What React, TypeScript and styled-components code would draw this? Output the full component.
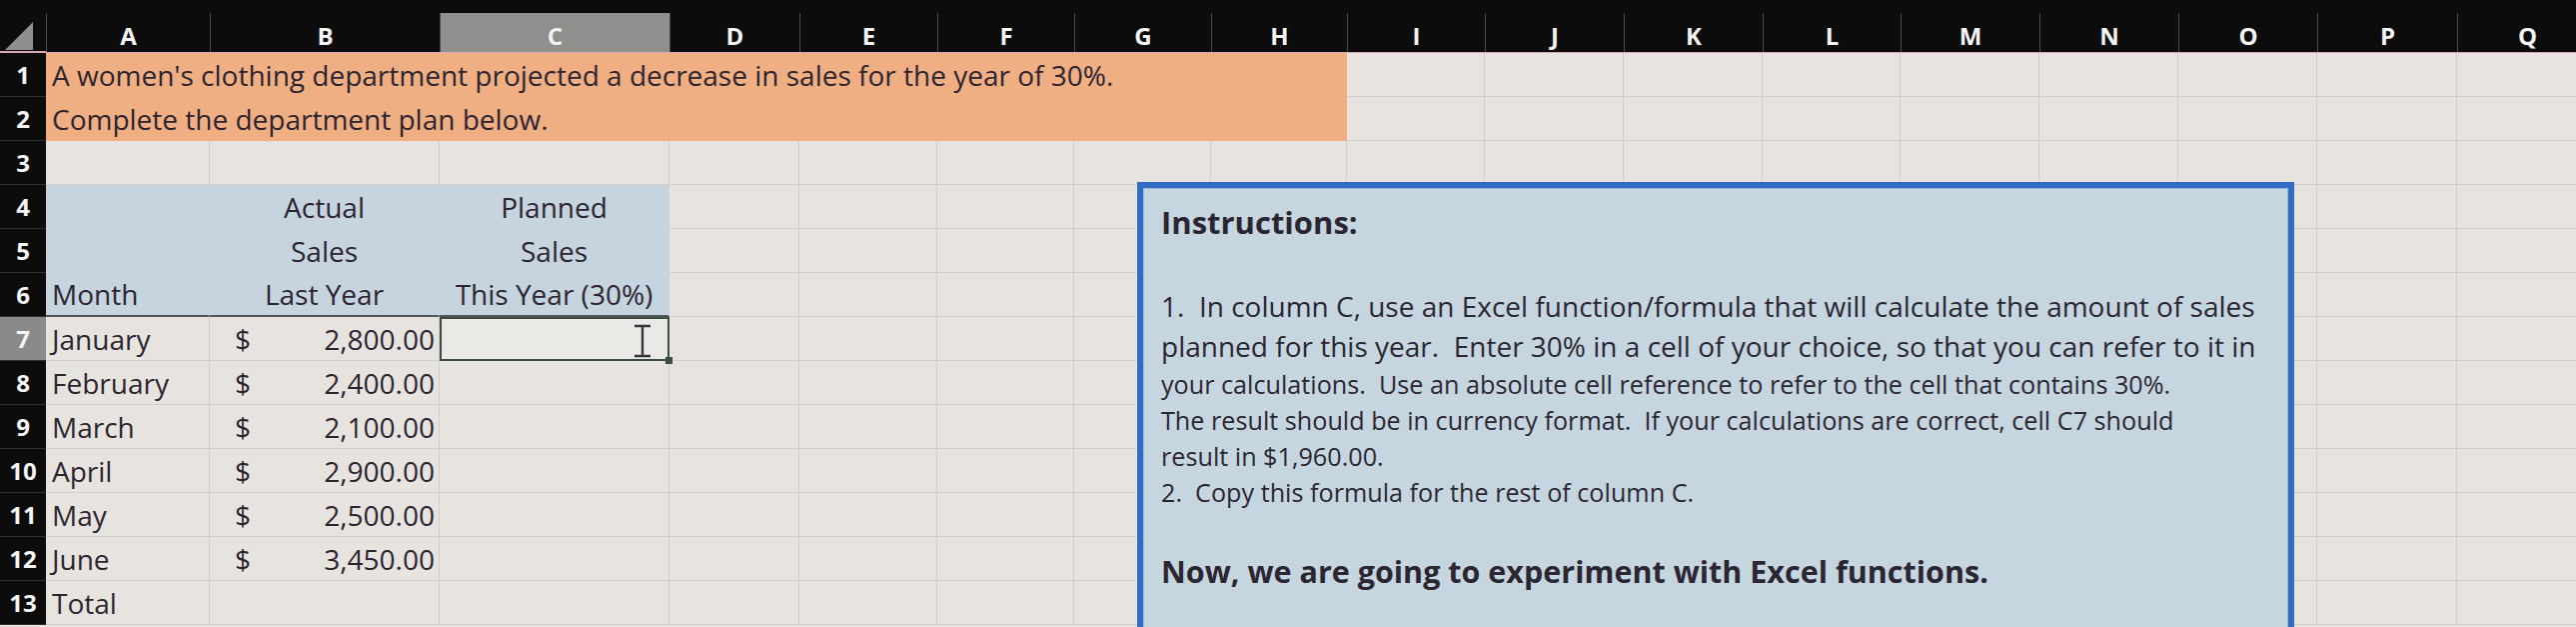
import React from "react";
import styled, { createGlobalStyle } from "styled-components";

const COLS = [46, 164, 230, 230, 130, 138, 137, 137, 136, 138, 139, 139, 138, 139, 139, 139, 140, 140];
const TEMPLATE = COLS.map((w) => `${w}px`).join(" ");
const LETTERS = "ABCDEFGHIJKLMNOPQ".split("");
const GRID = "#d2cec8";
const ORANGE = "#f0ae83";
const BLUE = "#c5d4de";
const FONT = `"Open Sans", Lato, "Liberation Sans", sans-serif`;

const GlobalStyle = createGlobalStyle`
  html, body {
    margin: 0;
    padding: 0;
    background: #e7e4df;
    overflow: hidden;
  }
`;

const Sheet = styled.div`
  position: relative;
  width: 2578px;
  height: 627px;
  overflow: hidden;
  background: #e7e4df;
  display: flex;
  flex-direction: column;
  font-family: ${FONT};
  color: #2d2530;
`;

const HeaderRow = styled.div`
  display: grid;
  grid-template-columns: ${TEMPLATE};
  height: 53px;
  box-sizing: border-box;
  padding-top: 13px;
  background: #0c0c0c;
  border-bottom: 2px solid #d8a8b6;
  flex-shrink: 0;
`;

const Corner = styled.div`
  & svg {
    display: block;
  }
`;

const ColHead = styled.div<{ $selected?: boolean }>`
  display: flex;
  align-items: center;
  justify-content: center;
  padding-top: 6px;
  box-sizing: border-box;
  background: ${(p) => (p.$selected ? "#8f8f8d" : "#0c0c0c")};
  border-left: 1px solid #4a4a4a;
  color: #f4f4f4;
  font-size: 24px;
  font-weight: 700;
`;

const Row = styled.div`
  display: grid;
  grid-template-columns: ${TEMPLATE};
  height: 44px;
  flex-shrink: 0;
`;

const RowHead = styled.div<{ $selected?: boolean }>`
  display: flex;
  align-items: center;
  justify-content: center;
  box-sizing: border-box;
  background: ${(p) => (p.$selected ? "#8a8a8a" : "#0c0c0c")};
  border-bottom: 1px solid #2e2e2e;
  color: #f5f5f5;
  font-size: 24px;
  font-weight: 700;
`;

const Cell = styled.div<{
  $fill?: string;
  $span?: number;
  $align?: "left" | "center" | "right";
  $rule?: boolean;
}>`
  display: flex;
  align-items: center;
  justify-content: ${(p) =>
    p.$align === "center" ? "center" : p.$align === "right" ? "flex-end" : "flex-start"};
  grid-column: span ${(p) => p.$span ?? 1};
  box-sizing: border-box;
  padding: 0 6px;
  background: ${(p) => p.$fill ?? "transparent"};
  border-right: 1px solid ${(p) => p.$fill ?? GRID};
  border-bottom: ${(p) => (p.$rule ? "2px solid #56545a" : `1px solid ${p.$fill ?? GRID}`)};
  font-size: 28px;
  white-space: nowrap;
  overflow: visible;
`;

const AmountCell = styled(Cell)`
  justify-content: space-between;
  padding: 0 4px 0 25px;
`;

const ActiveCell = styled(Cell)`
  position: relative;
  border: 2px solid #3a4d40;
  background: #ebe9e5;
  &::after {
    content: "";
    position: absolute;
    right: -5px;
    bottom: -5px;
    width: 7px;
    height: 7px;
    background: #3a4d40;
  }
`;

const Cursor = styled.svg`
  position: absolute;
  right: 14px;
  top: 5px;
`;

const NoteBox = styled.div`
  position: absolute;
  left: 1138px;
  top: 182px;
  width: 1158px;
  height: 480px;
  box-sizing: border-box;
  padding: 14px 18px;
  background: #c6d6e1;
  border: 6px solid #2f6cc2;
  box-shadow: inset 0 0 0 1px #9ab9e0;
  color: #2c2631;
  font-family: ${FONT};
`;

const NoteTitle = styled.div`
  font-size: 31px;
  font-weight: 700;
  line-height: 40px;
  margin-bottom: 44px;
`;

const NoteLine = styled.div<{ $small?: boolean }>`
  font-size: ${(p) => (p.$small ? 25.2 : 28)}px;
  line-height: ${(p) => (p.$small ? 36 : 40)}px;
  white-space: pre;
`;

const NoteFooter = styled.div`
  font-size: 30.5px;
  font-weight: 700;
  line-height: 44px;
  margin-top: 39px;
`;

const MONTHS: [string, string][] = [
  ["January", "2,800.00"],
  ["February", "2,400.00"],
  ["March", "2,100.00"],
  ["April", "2,900.00"],
  ["May", "2,500.00"],
  ["June", "3,450.00"],
];

const blanks = (n: number) => Array.from({ length: n }, (_, i) => <Cell key={`b${i}`} />);
const REST = COLS.length - 1;

export default function App() {
  return (
    <>
      <GlobalStyle />
      <Sheet>
        <HeaderRow>
          <Corner>
            <svg width="46" height="38" viewBox="0 0 46 38">
              <polygon points="33,9 33,37 5,37" fill="#8d8d8d" />
            </svg>
          </Corner>
          {LETTERS.map((l) => (
            <ColHead key={l} $selected={l === "C"}>
              {l}
            </ColHead>
          ))}
        </HeaderRow>

        <Row>
          <RowHead>1</RowHead>
          <Cell $fill={ORANGE} $span={8}>
            A women's clothing department projected a decrease in sales for the year of 30%.
          </Cell>
          {blanks(REST - 8)}
        </Row>
        <Row>
          <RowHead>2</RowHead>
          <Cell $fill={ORANGE} $span={8}>
            Complete the department plan below.
          </Cell>
          {blanks(REST - 8)}
        </Row>
        <Row>
          <RowHead>3</RowHead>
          {blanks(REST)}
        </Row>
        <Row>
          <RowHead>4</RowHead>
          <Cell $fill={BLUE} />
          <Cell $fill={BLUE} $align="center">Actual</Cell>
          <Cell $fill={BLUE} $align="center">Planned</Cell>
          {blanks(REST - 3)}
        </Row>
        <Row>
          <RowHead>5</RowHead>
          <Cell $fill={BLUE} />
          <Cell $fill={BLUE} $align="center">Sales</Cell>
          <Cell $fill={BLUE} $align="center">Sales</Cell>
          {blanks(REST - 3)}
        </Row>
        <Row>
          <RowHead>6</RowHead>
          <Cell $fill={BLUE} $rule>Month</Cell>
          <Cell $fill={BLUE} $rule $align="center">Last Year</Cell>
          <Cell $fill={BLUE} $rule $align="center">This Year (30%)</Cell>
          {blanks(REST - 3)}
        </Row>
        {MONTHS.map(([month, amount], i) => (
          <Row key={month}>
            <RowHead $selected={i === 0}>{7 + i}</RowHead>
            <Cell>{month}</Cell>
            <AmountCell>
              <span>$</span>
              <span>{amount}</span>
            </AmountCell>
            {i === 0 ? (
              <ActiveCell>
                <Cursor width="22" height="34" viewBox="0 0 22 34">
                  <path d="M3 2h16M11 2v30M3 32h16" stroke="#3b3440" strokeWidth="2.4" fill="none" />
                </Cursor>
              </ActiveCell>
            ) : (
              <Cell />
            )}
            {blanks(REST - 3)}
          </Row>
        ))}
        <Row>
          <RowHead>13</RowHead>
          <Cell>Total</Cell>
          {blanks(REST - 1)}
        </Row>

        <NoteBox>
          <NoteTitle>Instructions:</NoteTitle>
          <NoteLine>1.  In column C, use an Excel function/formula that will calculate the amount of sales</NoteLine>
          <NoteLine>planned for this year.  Enter 30% in a cell of your choice, so that you can refer to it in</NoteLine>
          <NoteLine $small>your calculations.  Use an absolute cell reference to refer to the cell that contains 30%.</NoteLine>
          <NoteLine $small>The result should be in currency format.  If your calculations are correct, cell C7 should</NoteLine>
          <NoteLine $small>result in $1,960.00.</NoteLine>
          <NoteLine $small>2.  Copy this formula for the rest of column C.</NoteLine>
          <NoteFooter>Now, we are going to experiment with Excel functions.</NoteFooter>
        </NoteBox>
      </Sheet>
    </>
  );
}
